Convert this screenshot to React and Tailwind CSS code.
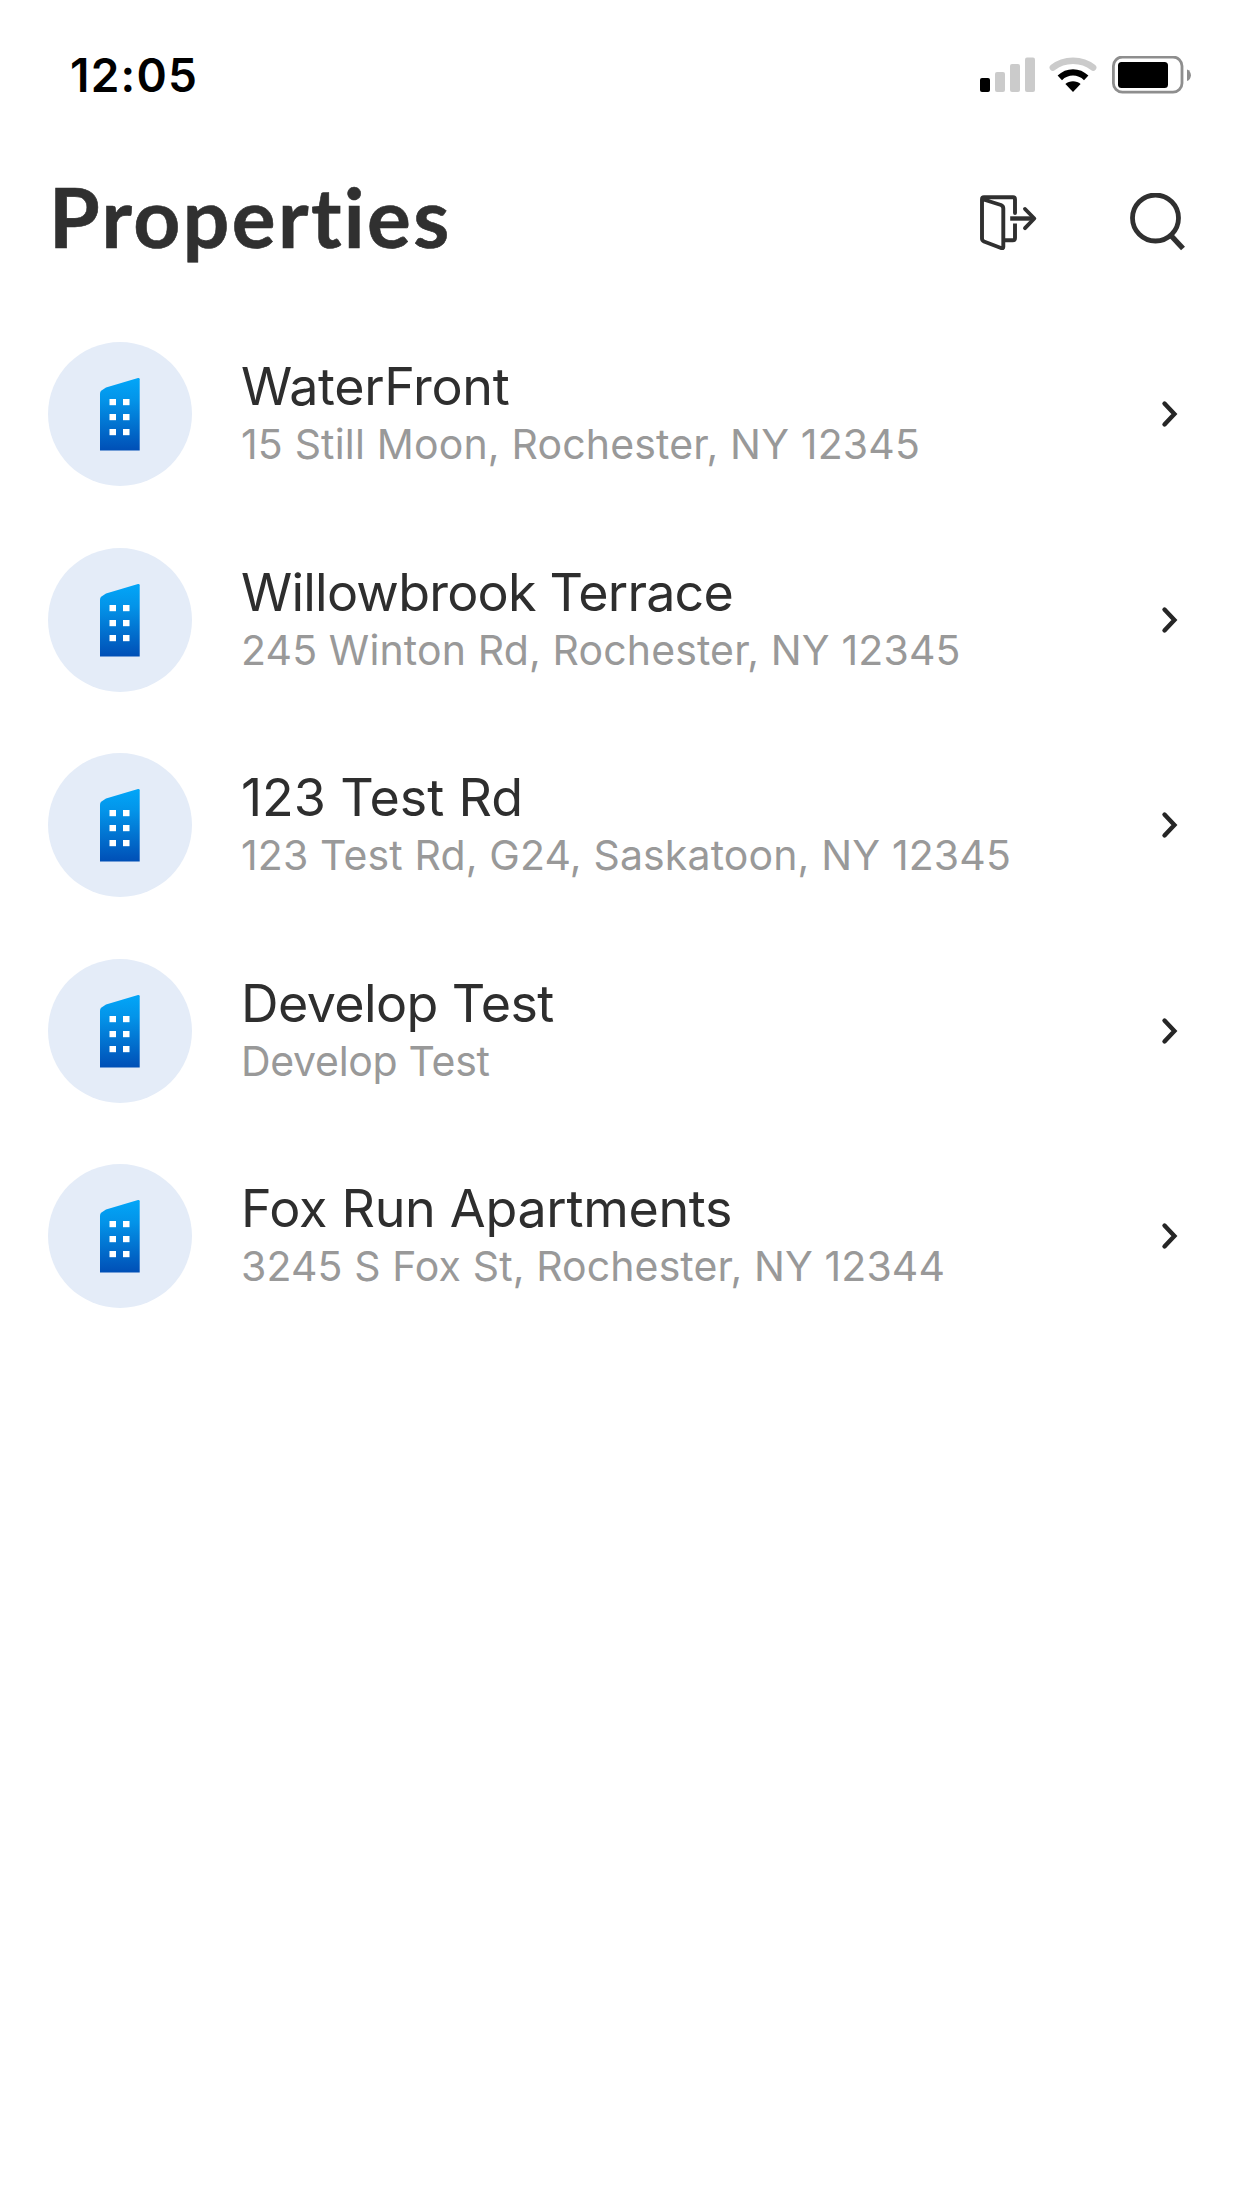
const properties = [
  {
    name: "WaterFront",
    address: "15 Still Moon, Rochester, NY 12345",
    nameTracking: "tracking-[-0.35px]",
    addressTracking: "tracking-[0.17px]",
  },
  {
    name: "Willowbrook Terrace",
    address: "245 Winton Rd, Rochester, NY 12345",
    nameTracking: "tracking-[-0.78px]",
    addressTracking: "tracking-[0.14px]",
  },
  {
    name: "123 Test Rd",
    address: "123 Test Rd, G24, Saskatoon, NY 12345",
    nameTracking: "tracking-[-0.1px]",
    addressTracking: "tracking-[0.14px]",
  },
  {
    name: "Develop Test",
    address: "Develop Test",
    nameTracking: "tracking-[-0.59px]",
    addressTracking: "tracking-[-0.3px]",
  },
  {
    name: "Fox Run Apartments",
    address: "3245 S Fox St, Rochester, NY 12344",
    nameTracking: "tracking-[-0.3px]",
    addressTracking: "tracking-[0.1px]",
  },
];

function SignalIcon() {
  return (
    <svg width="56" height="36" viewBox="0 0 56 36" className="block">
      <rect x="0" y="21" width="10" height="14" rx="2" fill="#000" />
      <rect x="15" y="15" width="10" height="20" rx="2" fill="#cbcbcb" />
      <rect x="30" y="7" width="10" height="28" rx="2" fill="#cbcbcb" />
      <rect x="45" y="0.5" width="10" height="34.5" rx="2" fill="#cbcbcb" />
    </svg>
  );
}

function WifiIcon() {
  return (
    <svg width="48" height="36" viewBox="0 0 48 36" className="block">
      <path d="M3.9 10.6C14.8 1.4 33.2 1.4 44.1 10.6" fill="none" stroke="#cbcbcb" strokeWidth="6.6" strokeLinecap="round" />
      <path d="M8.6 18.6C16.9 10 31.1 10 39.4 18.6L35 23.2C28.9 17 19.1 17 13 23.2Z" fill="#000" />
      <path d="M16.4 27C20.4 23.2 27.6 23.2 31.6 27L24 35Z" fill="#000" />
    </svg>
  );
}

function BatteryIcon() {
  return (
    <svg width="80" height="38" viewBox="0 0 80 38" className="block">
      <rect x="1.4" y="1" width="68.6" height="35.2" rx="9" fill="none" stroke="#8e8e8e" strokeWidth="2.8" />
      <rect x="6" y="6" width="50" height="26" rx="3.5" fill="#000" />
      <path d="M75 13.5C80.2 15 80.2 23.5 75 25Z" fill="#8e8e8e" />
    </svg>
  );
}

function ExitIcon() {
  return (
    <svg
      width="60"
      height="60"
      viewBox="0 0 60 60"
      fill="none"
      stroke="#303030"
      strokeWidth="3.9"
      strokeLinecap="round"
      strokeLinejoin="round"
      className="block"
    >
      <path d="M3.5 9.5L21 15Q23.3 16 23.3 18.5V57Q23.3 59 21 58L4 51.5Q2 50.5 2 48.5V9.5Q2 7.3 4 7.3H33Q35 7.3 35 9.5V23" />
      <path d="M35 33.5V48Q35 50.3 32.7 50.3H25" strokeLinecap="butt" />
      <path d="M30.2 28.5H54" strokeLinecap="butt" strokeWidth="4.4" />
      <path d="M45 19L54.3 28.5L45 38.2" />
    </svg>
  );
}

function SearchIcon() {
  return (
    <svg width="56" height="60" viewBox="0 0 56 60" fill="none" stroke="#303030" strokeWidth="4.8" className="block">
      <circle cx="25.5" cy="25" r="23" />
      <path d="M40 41.5L53 55.5" strokeWidth="5.4" />
    </svg>
  );
}

function BuildingIcon() {
  return (
    <svg width="40" height="74" viewBox="0 0 40 74" className="block">
      <defs>
        <linearGradient id="building" x1="0" y1="0" x2="0" y2="1">
          <stop offset="0" stopColor="#02a6f8" />
          <stop offset="0.3" stopColor="#0394e9" />
          <stop offset="1" stopColor="#004fb6" />
        </linearGradient>
      </defs>
      <path d="M0 16.5Q0 14.5 1.5 13.5L6 10.5L38 1.1Q39.7 0.8 39.7 2.3V73.5H0Z" fill="url(#building)" />
      <g fill="#fff">
        <rect x="9.5" y="22" width="6.5" height="6.2" />
        <rect x="23" y="22" width="6.5" height="6.2" />
        <rect x="9.5" y="37" width="6.5" height="6.2" />
        <rect x="23" y="37" width="6.5" height="6.2" />
        <rect x="9.5" y="52" width="6.5" height="6.2" />
        <rect x="23" y="52" width="6.5" height="6.2" />
      </g>
    </svg>
  );
}

function ChevronIcon() {
  return (
    <svg width="18" height="28" viewBox="0 0 18 28" fill="none" stroke="#262626" strokeWidth="4.4" strokeLinecap="round" className="block">
      <path d="M3.5 3.5L13.4 14L3.5 24.5" />
    </svg>
  );
}

function PropertyRow({ property }) {
  return (
    <li className="flex h-[205.5px] items-center pl-12 pr-[63px]">
      <div className="flex size-36 shrink-0 items-center justify-center rounded-full bg-[#e4ecf8]">
        <BuildingIcon />
      </div>
      <div className="ml-[49px] grow pt-px whitespace-nowrap">
        <div className={`text-[52px] leading-[60px] text-[#2e2e2e] ${property.nameTracking}`}>{property.name}</div>
        <div className={`text-[41px] leading-[55px] text-[#999] ${property.addressTracking}`}>{property.address}</div>
      </div>
      <ChevronIcon />
    </li>
  );
}

export default function App() {
  return (
    <main className="min-h-[2208px] w-[1242px] bg-white font-['Inter',sans-serif]">
      <div className="flex h-[150px] items-center justify-between pl-[70px] pr-[50px]">
        <div className="text-[46px] leading-[60px] font-semibold tracking-[1.2px] text-black">12:05</div>
        <div className="flex items-center">
          <SignalIcon />
          <div className="ml-[13px]">
            <WifiIcon />
          </div>
          <div className="ml-[15px]">
            <BatteryIcon />
          </div>
        </div>
      </div>
      <header className="flex h-[161.5px] items-start justify-between pl-[49px] pr-[56px]">
        <h1 className="mt-4 font-['Lato',sans-serif] text-[82px] leading-[100px] font-bold tracking-[2.4px] text-[#303030] [-webkit-text-stroke:0.6px_#303030]">
          Properties
        </h1>
        <div className="mt-10 flex items-start gap-[90px]">
          <ExitIcon />
          <div className="mt-[3px]">
            <SearchIcon />
          </div>
        </div>
      </header>
      <ul>
        {properties.map((property) => (
          <PropertyRow key={property.name} property={property} />
        ))}
      </ul>
    </main>
  );
}
